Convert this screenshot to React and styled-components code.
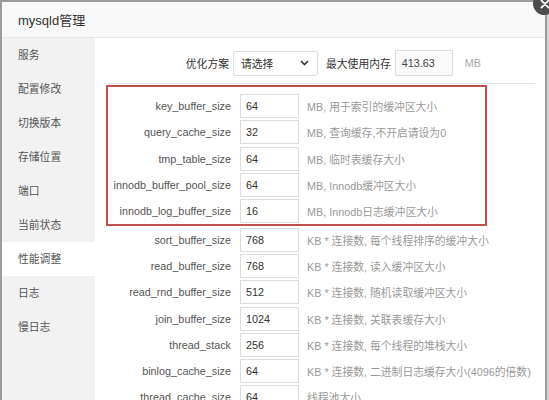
import React from "react";
import styled, { createGlobalStyle } from "styled-components";

const Global = createGlobalStyle`
  html, body { margin: 0; padding: 0; background: #d4d4d4; overflow: hidden; }
  body { font-family: "Liberation Sans", "Noto Sans CJK SC", sans-serif; }
  * { box-sizing: border-box; }
`;

const Page = styled.div`
  position: relative;
  width: 549px;
  height: 400px;
  overflow: hidden;
`;

const Dialog = styled.div`
  width: 547px;
  height: 400px;
  border: 2px solid #9c9c9c;
  border-bottom: none;
  background: #fff;
  display: flex;
  flex-direction: column;
`;

const TitleBar = styled.div`
  height: 36px;
  flex: none;
  padding-left: 16px;
  display: flex;
  align-items: center;
  background: #f8f8f8;
  border-bottom: 1px solid #e6e6e6;
  color: #333;
  font-size: 13px;
`;

const Body = styled.div`
  flex: 1;
  display: flex;
  min-height: 0;
`;

const Sidebar = styled.div`
  width: 93px;
  flex: none;
  background: #f2f2f2;
`;

const NavItem = styled.div`
  height: 34px;
  line-height: 34px;
  padding-left: 16px;
  font-size: 10.8px;
  color: #555;
  background: ${(p) => (p.$active ? "#fff" : "transparent")};
`;

const Main = styled.div`
  flex: 1;
  padding: 12px 10px 0 0;
  min-width: 0;
`;

const Header = styled.div`
  display: flex;
  align-items: center;
  height: 26px;
  font-size: 10.8px;
  color: #333;
`;

const HeaderLabel = styled.span`
  width: ${(p) => p.$w || "auto"};
  text-align: right;
  margin-right: 4px;
  white-space: nowrap;
`;

const Select = styled.div`
  width: 85px;
  height: 25px;
  border: 1px solid #ddd;
  border-radius: 2px;
  padding: 0 8px 0 7px;
  display: flex;
  align-items: center;
  justify-content: space-between;
  margin-right: 8px;
  color: #333;
`;

const ReadInput = styled.div`
  width: 58px;
  height: 26px;
  border: 1px solid #ddd;
  background: #fafafa;
  display: flex;
  align-items: center;
  padding-left: 6px;
  color: #444;
  margin-right: 12px;
`;

const Unit = styled.span`
  color: #aaa;
`;

const Divider = styled.div`
  height: 1px;
  background: #e6e6e6;
  margin: 7px 0 0 9px;
`;

const Highlight = styled.div`
  margin: 1px 0 0 11px;
  width: 381px;
  border: 2px solid #c0504d;
  padding-top: 6px;
`;

const Row = styled.div`
  display: flex;
  align-items: center;
  height: 26.3px;
  font-size: 10.8px;
`;

const Label = styled.div`
  width: ${(p) => p.$w}px;
  flex: none;
  text-align: right;
  padding-right: 9px;
  color: #555;
  white-space: nowrap;
`;

const Field = styled.div`
  width: 59px;
  height: 24px;
  flex: none;
  border: 1px solid #ddd;
  display: flex;
  align-items: center;
  padding-left: 5px;
  color: #333;
`;

const Desc = styled.div`
  margin-left: 8px;
  color: #999;
  white-space: nowrap;
`;

const Close = styled.div`
  position: absolute;
  left: 533px;
  top: -8px;
  width: 23px;
  height: 23px;
  border-radius: 50%;
  background: #4d4d4d;
  display: flex;
  align-items: center;
  justify-content: center;
`;

const nav = ["服务", "配置修改", "切换版本", "存储位置", "端口", "当前状态", "性能调整", "日志", "慢日志"];

const highlighted = [
  ["key_buffer_size", "64", "MB, 用于索引的缓冲区大小"],
  ["query_cache_size", "32", "MB, 查询缓存,不开启请设为0"],
  ["tmp_table_size", "64", "MB, 临时表缓存大小"],
  ["innodb_buffer_pool_size", "64", "MB, Innodb缓冲区大小"],
  ["innodb_log_buffer_size", "16", "MB, Innodb日志缓冲区大小"],
];

const rest = [
  ["sort_buffer_size", "768", "KB * 连接数, 每个线程排序的缓冲大小"],
  ["read_buffer_size", "768", "KB * 连接数, 读入缓冲区大小"],
  ["read_rnd_buffer_size", "512", "KB * 连接数, 随机读取缓冲区大小"],
  ["join_buffer_size", "1024", "KB * 连接数, 关联表缓存大小"],
  ["thread_stack", "256", "KB * 连接数, 每个线程的堆栈大小"],
  ["binlog_cache_size", "64", "KB * 连接数, 二进制日志缓存大小(4096的倍数)"],
  ["thread_cache_size", "64", "线程池大小"],
];

function ParamRow({ w, item }) {
  return (
    <Row>
      <Label $w={w}>{item[0]}</Label>
      <Field>{item[1]}</Field>
      <Desc>{item[2]}</Desc>
    </Row>
  );
}

export default function App() {
  return (
    <Page>
      <Global />
      <Dialog>
        <TitleBar>mysqld管理</TitleBar>
        <Body>
          <Sidebar>
            {nav.map((n) => (
              <NavItem key={n} $active={n === "性能调整"}>{n}</NavItem>
            ))}
          </Sidebar>
          <Main>
            <Header>
              <HeaderLabel $w="134px">优化方案</HeaderLabel>
              <Select>
                <span>请选择</span>
                <svg width="9" height="6" viewBox="0 0 9 6">
                  <path d="M1 1l3.5 3.5L8 1" fill="none" stroke="#333" strokeWidth="1.6" />
                </svg>
              </Select>
              <HeaderLabel>最大使用内存</HeaderLabel>
              <ReadInput>413.63</ReadInput>
              <Unit>MB</Unit>
            </Header>
            <Divider />
            <Highlight>
              {highlighted.map((it) => (
                <ParamRow key={it[0]} w={132} item={it} />
              ))}
            </Highlight>
            {rest.map((it) => (
              <ParamRow key={it[0]} w={145} item={it} />
            ))}
          </Main>
        </Body>
      </Dialog>
      <Close>
        <svg width="10" height="10" viewBox="0 0 10 10">
          <path d="M1.5 1.5l7 7M8.5 1.5l-7 7" stroke="#fff" strokeWidth="1.8" strokeLinecap="round" />
        </svg>
      </Close>
    </Page>
  );
}
